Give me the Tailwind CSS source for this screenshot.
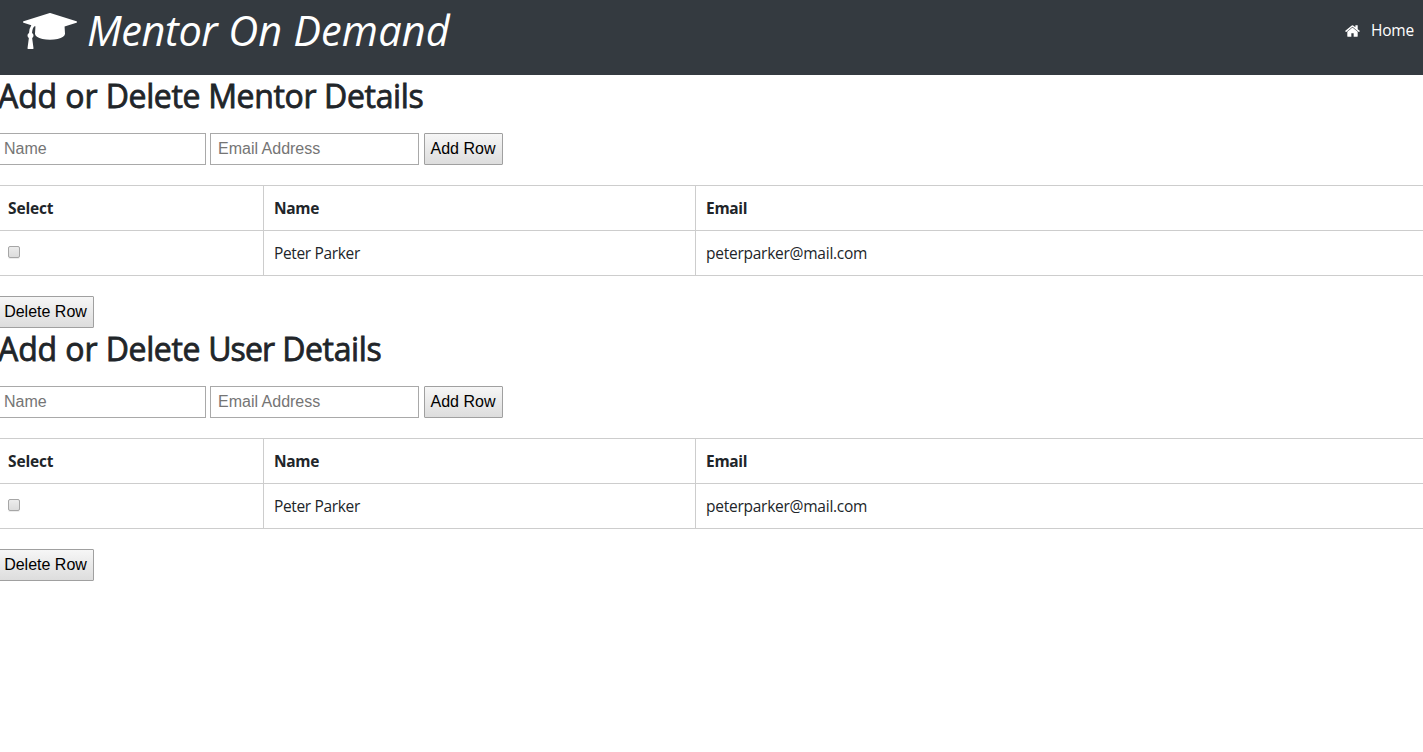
<!DOCTYPE html>
<html lang="en">
<head>
<meta charset="utf-8">
<title>Mentor On Demand</title>
<script src="https://cdn.jsdelivr.net/npm/@tailwindcss/browser@4"></script>
</head>
<body class="bg-white text-[#212529] font-['Open_Sans','Noto_Sans',sans-serif] text-base overflow-hidden h-screen">
<header class="h-[75px] bg-[#343a40] text-white flex items-start justify-between pl-[23px] pr-[9px]">
  <div class="flex items-start">
    <svg class="w-[54px] h-9 mt-[13px]" viewBox="0 -1408 2304 1536" fill="currentColor"><path transform="scale(1,-1)" d="M1774 836l18 -316q4 -69 -82 -128t-235 -93.5t-323 -34.5t-323 34.5t-235 93.5t-82 128l18 316l574 -181q22 -7 48 -7t48 7zM2304 1024q0 -23 -22 -31l-1120 -352q-4 -1 -10 -1t-10 1l-652 206q-43 -34 -71 -111.5t-34 -178.5q63 -36 63 -109q0 -69 -58 -107l58 -433q2 -14 -8 -25q-9 -11 -24 -11h-192q-15 0 -24 11q-10 11 -8 25l58 433q-58 38 -58 107q0 73 65 111q11 207 98 330l-333 104q-22 8 -22 31t22 31l1120 352q4 1 10 1t10 -1l1120 -352q22 -8 22 -31z"/></svg>
    <span class="ml-[10px] text-[41.5px] leading-[60px] italic tracking-[0.12px] whitespace-nowrap"><span class="tracking-[-0.4px]">Mentor</span> On Demand</span>
  </div>
  <a class="flex items-center h-[62px]">
    <svg class="w-[15px] h-3 mr-[11px] -mt-px" viewBox="0 -1283 1664 1283" fill="currentColor"><path transform="scale(1,-1)" d="M1408 544v-480q0 -26 -19 -45t-45 -19h-384v384h-256v-384h-384q-26 0 -45 19t-19 45v480q0 1 .5 3t.5 3l575 474l575 -474q1 -2 1 -6zM1631 613l-62 -74q-8 -9 -21 -11h-3q-13 0 -21 7l-692 577l-692 -577q-12 -8 -24 -7q-13 2 -21 11l-62 74q-8 10 -7 23.5t11 21.5l719 599q32 26 76 26t76 -26l244 -204v195q0 14 9 23t23 9h192q14 0 23 -9t9 -23v-408l219 -182q10 -8 11 -21.5t-7 -23.5z"/></svg>
    <span class="text-[15.5px] tracking-[-0.2px]">Home</span>
  </a>
</header>
<main>
  <section class="h-[253px]">
    <h2 class="-ml-[2px] h-[58px] text-[32px] leading-[42px] font-normal tracking-[-0.35px] [-webkit-text-stroke:0.8px_#212529] whitespace-nowrap"><span class="tracking-[-0.1px]">Add or </span>Delete Mentor Details</h2>
    <div class="flex h-8 -ml-[3px] font-['Liberation_Sans',Arial,sans-serif]">
      <input placeholder="Name" class="w-[209px] h-8 border border-[#a9a9a9] px-1.5 pb-px placeholder:text-[#757575]">
      <input placeholder="Email Address" class="ml-1 w-[209px] h-8 border border-[#a9a9a9] pl-[7px] pr-1.5 pb-px placeholder:text-[#757575]">
      <button class="ml-[5px] w-[79px] h-8 pb-px pr-px rounded-[1px] border border-[#a0a0a0] bg-linear-to-b from-[#f6f6f6] to-[#dddddd] text-black whitespace-nowrap">Add Row</button>
    </div>
    <table class="mt-5 w-full table-fixed border-collapse text-left text-[15.5px] leading-6">
      <colgroup><col class="w-[263px]"><col class="w-[432px]"><col></colgroup>
      <tr class="h-[45px] border-y border-[#cdcdcd]"><th class="pl-2 py-0 font-bold tracking-[-0.15px]">Select</th><th class="border-l border-[#cdcdcd] pl-[10.5px] py-0 font-bold tracking-[-0.3px]">Name</th><th class="border-l border-[#cdcdcd] pl-[10.5px] py-0 font-bold tracking-[-0.3px]">Email</th></tr>
      <tr class="h-[45px] border-y border-[#cdcdcd]"><td class="pl-2 py-0"><span role="checkbox" class="block size-3 mb-[3px] rounded-[2px] border border-[#a6a6a6] bg-linear-to-b from-[#ececec] to-[#dcdcdc] shadow-[0_1px_0_#ededed]"></span></td><td class="border-l border-[#cdcdcd] pl-[10.5px] py-0 tracking-[-0.35px]">Peter Parker</td><td class="border-l border-[#cdcdcd] pl-[10.5px] py-0 tracking-[-0.25px]">peterparker@mail.com</td></tr>
    </table>
    <button class="block mt-5 -ml-[3px] w-[97px] h-8 px-0 pb-px rounded-[1px] border border-[#a0a0a0] bg-linear-to-b from-[#f6f6f6] to-[#dddddd] text-black whitespace-nowrap font-['Liberation_Sans',Arial,sans-serif]">Delete Row</button>
  </section>
  <section class="h-[253px]">
    <h2 class="-ml-[2px] h-[58px] text-[32px] leading-[42px] font-normal tracking-[-0.35px] [-webkit-text-stroke:0.8px_#212529] whitespace-nowrap"><span class="tracking-[-0.1px]">Add or </span>Delete <span class="tracking-[-0.9px]">User</span> Details</h2>
    <div class="flex h-8 -ml-[3px] font-['Liberation_Sans',Arial,sans-serif]">
      <input placeholder="Name" class="w-[209px] h-8 border border-[#a9a9a9] px-1.5 pb-px placeholder:text-[#757575]">
      <input placeholder="Email Address" class="ml-1 w-[209px] h-8 border border-[#a9a9a9] pl-[7px] pr-1.5 pb-px placeholder:text-[#757575]">
      <button class="ml-[5px] w-[79px] h-8 pb-px pr-px rounded-[1px] border border-[#a0a0a0] bg-linear-to-b from-[#f6f6f6] to-[#dddddd] text-black whitespace-nowrap">Add Row</button>
    </div>
    <table class="mt-5 w-full table-fixed border-collapse text-left text-[15.5px] leading-6">
      <colgroup><col class="w-[263px]"><col class="w-[432px]"><col></colgroup>
      <tr class="h-[45px] border-y border-[#cdcdcd]"><th class="pl-2 py-0 font-bold tracking-[-0.15px]">Select</th><th class="border-l border-[#cdcdcd] pl-[10.5px] py-0 font-bold tracking-[-0.3px]">Name</th><th class="border-l border-[#cdcdcd] pl-[10.5px] py-0 font-bold tracking-[-0.3px]">Email</th></tr>
      <tr class="h-[45px] border-y border-[#cdcdcd]"><td class="pl-2 py-0"><span role="checkbox" class="block size-3 mb-[3px] rounded-[2px] border border-[#a6a6a6] bg-linear-to-b from-[#ececec] to-[#dcdcdc] shadow-[0_1px_0_#ededed]"></span></td><td class="border-l border-[#cdcdcd] pl-[10.5px] py-0 tracking-[-0.35px]">Peter Parker</td><td class="border-l border-[#cdcdcd] pl-[10.5px] py-0 tracking-[-0.25px]">peterparker@mail.com</td></tr>
    </table>
    <button class="block mt-5 -ml-[3px] w-[97px] h-8 px-0 pb-px rounded-[1px] border border-[#a0a0a0] bg-linear-to-b from-[#f6f6f6] to-[#dddddd] text-black whitespace-nowrap font-['Liberation_Sans',Arial,sans-serif]">Delete Row</button>
  </section>
</main>
</body>
</html>
